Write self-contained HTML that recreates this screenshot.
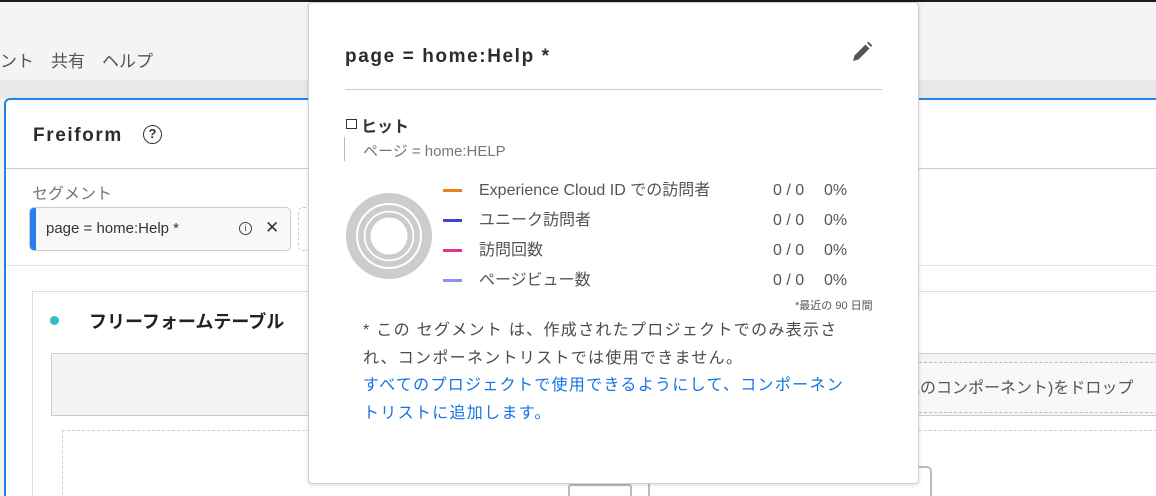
<!DOCTYPE html><html><head><meta charset="utf-8"><style>
*{margin:0;padding:0;box-sizing:border-box}
html,body{width:1156px;height:496px;overflow:hidden}
body{background:#f4f4f4;position:relative;font-family:"Liberation Sans","Noto Sans CJK JP",sans-serif;color:#4b4b4b}
.a{position:absolute;white-space:nowrap}
.lg{position:absolute;font-size:16px;color:#555;line-height:20px}
</style></head><body>
<div class="a" style="left:0;top:0;width:1156px;height:2px;background:#1a1a1a"></div>
<div class="a" style="left:0;top:47px;font-size:17px;color:#555">ント　共有　ヘルプ</div>
<div class="a" style="left:0;top:80px;width:1156px;height:18px;background:#e8e8e8"></div>
<div class="a" style="left:4px;top:98px;width:1160px;height:410px;background:#fff;border:2px solid #2680eb;border-right:none;border-bottom:none;border-radius:6px 0 0 0"></div>
<div class="a" style="left:33px;top:125px;font-size:19px;font-weight:bold;color:#2c2c2c;letter-spacing:1.6px">Freiform</div>
<div class="a" style="left:143px;top:125px;width:19px;height:19px;border:1.5px solid #333;border-radius:50%;font-size:13px;font-weight:bold;text-align:center;line-height:16px;color:#333">?</div>
<div class="a" style="left:6px;top:168px;width:1150px;height:1px;background:#ccc"></div>
<div class="a" style="left:32px;top:180px;font-size:16px;color:#777">セグメント</div>
<div class="a" style="left:29px;top:207px;width:262px;height:44px;background:#f8f8f8;border:1px solid #ccc;border-radius:5px;overflow:hidden">
<div class="a" style="left:0;top:0;width:6px;height:44px;background:#2680eb"></div>
<div class="a" style="left:16px;top:12px;font-size:15px;color:#333">page = home:Help *</div>
<div class="a" style="left:209px;top:14px;width:13px;height:13px;border:1.3px solid #444;border-radius:50%;font-size:9px;text-align:center;line-height:11px;color:#444">i</div>
<div class="a" style="left:235px;top:10px;font-size:17px;color:#333">✕</div>
</div>
<div class="a" style="left:298px;top:207px;width:12px;height:44px;border:1px dashed #ccc;border-right:none;border-radius:5px 0 0 5px"></div>
<div class="a" style="left:6px;top:265px;width:1150px;height:1px;background:#e4e4e4"></div>
<div class="a" style="left:32px;top:291px;width:1130px;height:220px;border:1px solid #ddd;background:#fff"></div>
<div class="a" style="left:50px;top:316px;width:9px;height:9px;border-radius:50%;background:#2fbfc6"></div>
<div class="a" style="left:89px;top:308px;font-size:18px;font-weight:bold;color:#222">フリーフォームテーブル</div>
<div class="a" style="left:51px;top:353px;width:1110px;height:63px;background:#f4f4f4;border:1px solid #ccc"></div>
<div class="a" style="left:648px;top:362px;width:520px;height:51px;border:1px dashed #bbb;background:#f8f8f8"></div>
<div class="a" style="left:888px;top:374px;font-size:16px;color:#555">は他のコンポーネント)をドロップ</div>
<div class="a" style="left:62px;top:430px;width:1100px;height:80px;border:1px dashed #ccc"></div>
<div class="a" style="left:568px;top:484px;width:64px;height:20px;border:2px solid #bbb;border-radius:3px"></div>
<div class="a" style="left:648px;top:466px;width:284px;height:40px;border:2px solid #bbb;border-radius:5px"></div>
<div class="a" style="left:308px;top:2px;width:611px;height:482px;background:#fff;border:1px solid #d0d0d0;border-radius:4px;box-shadow:0 1px 4px rgba(0,0,0,.15)"></div>
<div class="a" style="left:345px;top:46px;font-size:19px;font-weight:bold;color:#2c2c2c;letter-spacing:1.6px">page = home:Help *</div>
<svg class="a" style="left:851px;top:41px" width="22" height="22" viewBox="0 0 22 22"><path d="M2 20 L3.5 14.5 L14.5 3.5 L18.5 7.5 L7.5 18.5 Z M16 2 L17.5 0.8 L21.2 4.5 L20 6 Z" fill="#555"/></svg>
<div class="a" style="left:345px;top:89px;width:537px;height:1px;background:#ccc"></div>
<div class="a" style="left:346px;top:119px;width:11px;height:10px;border:1.5px solid #333"></div>
<div class="a" style="left:361px;top:113px;font-size:16px;font-weight:bold;color:#333">ヒット</div>
<div class="a" style="left:344px;top:137px;width:1px;height:24px;background:#bbb"></div>
<div class="a" style="left:363px;top:140px;font-size:15px;color:#777">ページ = home:HELP</div>
<svg class="a" style="left:345px;top:192px" width="88" height="88" viewBox="0 0 88 88"><g fill="none" stroke="#ccc"><circle cx="44" cy="44" r="38" stroke-width="10"/><circle cx="44" cy="44" r="28" stroke-width="6"/><circle cx="44" cy="44" r="21" stroke-width="5"/></g><g fill="none" stroke="#fff" stroke-width="1.5"><circle cx="44" cy="44" r="32"/><circle cx="44" cy="44" r="24.5"/></g></svg>
<div class="a" style="left:443px;top:189px;width:19px;height:3px;background:#e68619"></div>
<div class="a" style="left:443px;top:219px;width:19px;height:3px;background:#4046ca"></div>
<div class="a" style="left:443px;top:249px;width:19px;height:3px;background:#d83790"></div>
<div class="a" style="left:443px;top:279px;width:19px;height:3px;background:#8f8ef8"></div>
<div class="lg" style="left:479px;top:181px">Experience Cloud ID での訪問者</div>
<div class="lg" style="left:479px;top:211px">ユニーク訪問者</div>
<div class="lg" style="left:479px;top:241px">訪問回数</div>
<div class="lg" style="left:479px;top:271px">ページビュー数</div>
<div class="lg" style="left:773px;top:181px">0 / 0</div><div class="lg" style="left:824px;top:181px">0%</div>
<div class="lg" style="left:773px;top:211px">0 / 0</div><div class="lg" style="left:824px;top:211px">0%</div>
<div class="lg" style="left:773px;top:241px">0 / 0</div><div class="lg" style="left:824px;top:241px">0%</div>
<div class="lg" style="left:773px;top:271px">0 / 0</div><div class="lg" style="left:824px;top:271px">0%</div>
<div class="a" style="left:795px;top:297px;font-size:11px;color:#555">*最近の 90 日間</div>
<div class="a" style="left:363px;top:317px;font-size:16px;color:#4b4b4b;line-height:27.5px;letter-spacing:1.3px">* この セグメント は、作成されたプロジェクトでのみ表示さ<br>れ、コンポーネントリストでは使用できません。<br><span style="color:#1473e6">すべてのプロジェクトで使用できるようにして、コンポーネン<br>トリストに追加します。</span></div>
</body></html>
